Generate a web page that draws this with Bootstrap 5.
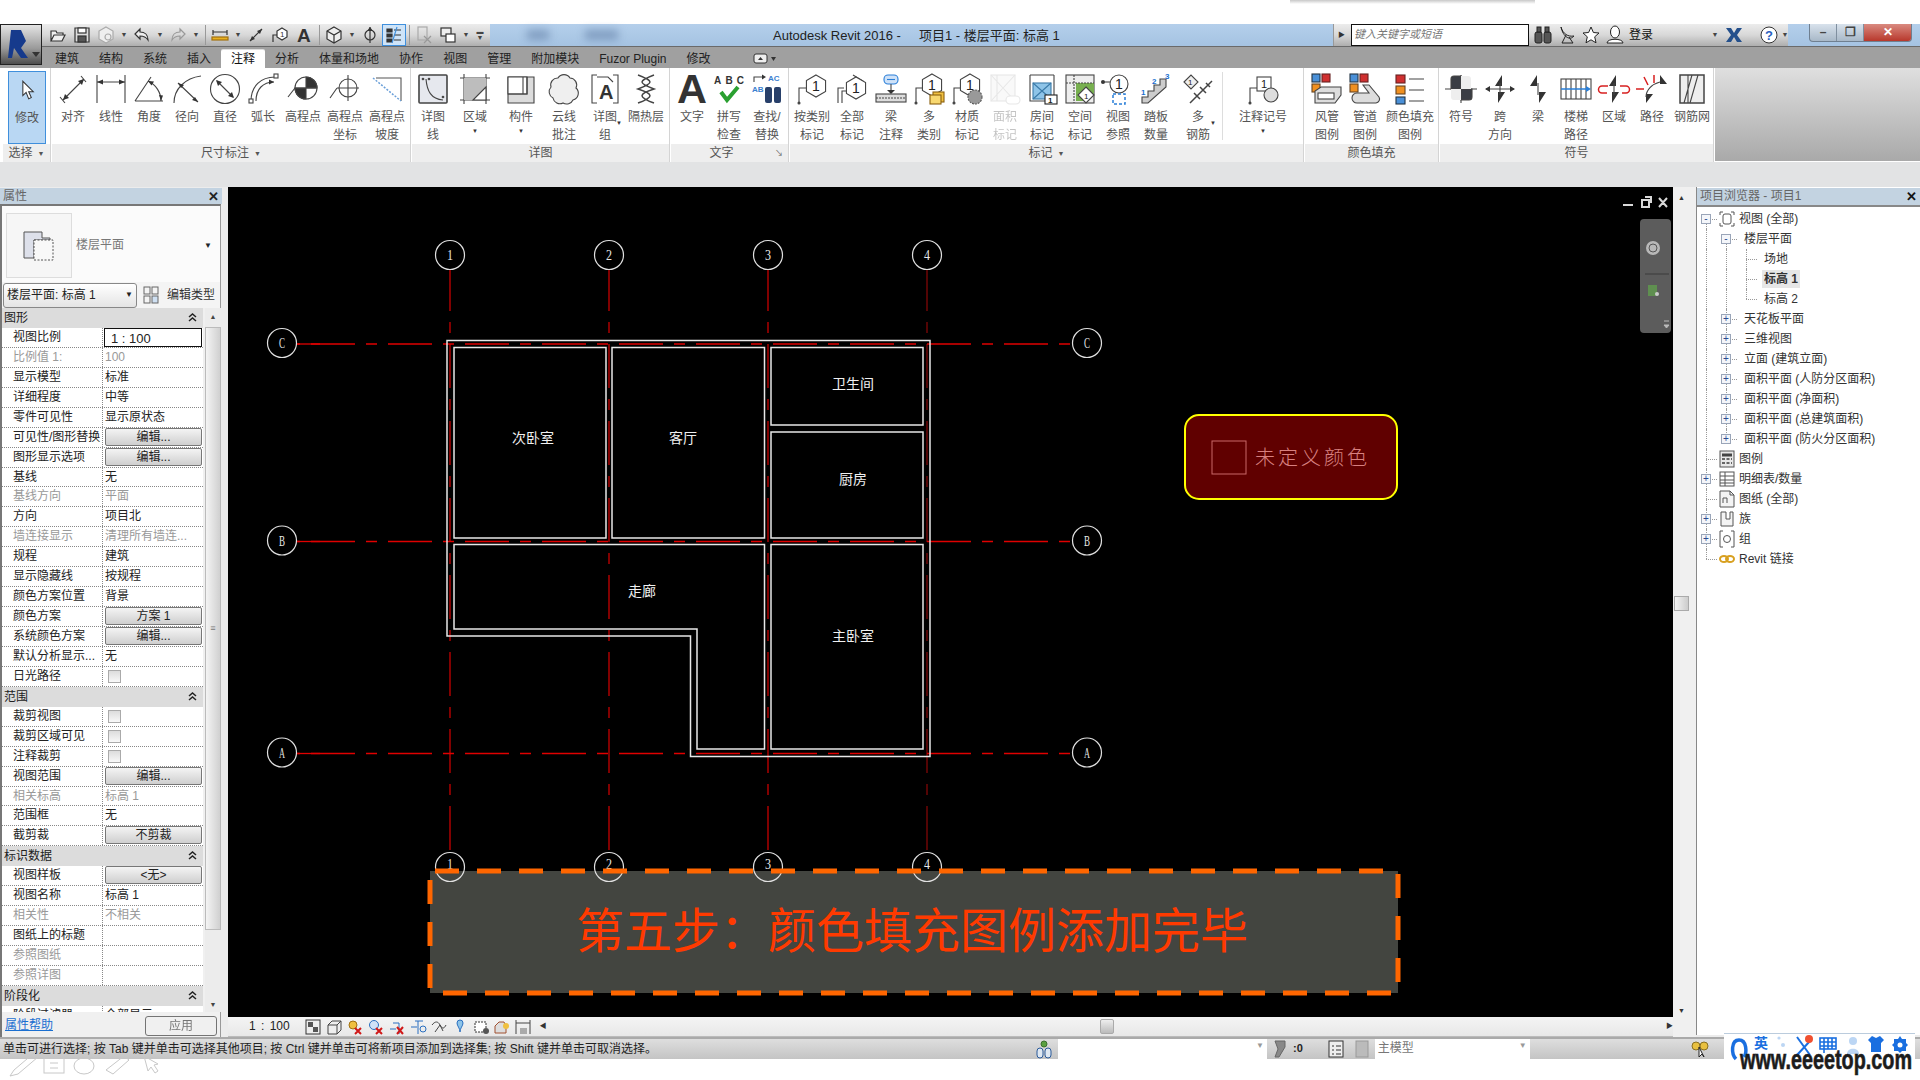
<!DOCTYPE html>
<html lang="zh-CN">
  <head>
    <meta charset="UTF-8" />
    <title>Autodesk Revit 2016 - 项目1 - 楼层平面: 标高 1</title>
    <link
      href="https://cdn.jsdelivr.net/npm/bootstrap@5.3.3/dist/css/bootstrap.min.css"
      rel="stylesheet"
    />
    <style>
      body {
        width: 1920px;
        height: 1080px;
        overflow: hidden;
        background: #fff;
        font-family: "Liberation Sans", "Noto Sans CJK SC", sans-serif;
        font-size: 12px;
        color: #333;
        line-height: 1.2;
        position: relative;
      }
      svg { overflow: visible; }
      .top-gap { height: 24px; }
      .top-shadow {
        margin-left: 1290px;
        width: 245px;
        height: 4px;
        background: linear-gradient(#c8c8c8, #fff);
      }
      .head-row { background: #a0a0a0; height: 44px; }
      .app-btn {
        width: 42px;
        height: 41px;
        flex: none;
        border: 1px solid #222;
        background: linear-gradient(#e4e4e4, #9a9a9a 60%, #4c4c4c);
        position: relative;
        z-index: 2;
      }
      .title-bar {
        height: 23px;
        background: linear-gradient(#b4cfeb, #a5c3e2);
        border-bottom: 1px solid #6a6a6a;
      }
      .qat {
        width: 448px;
        padding-left: 4px;
        height: 22px;
        flex: none;
        background: linear-gradient(#ececec, #d8d8d8 50%, #aeaeae);
      }
      .qi { width: 24px; flex: none; display: flex; justify-content: center; }
      .qi-on { background: #cfe4f8; outline: 1px solid #3f8fdc; outline-offset: -1px; height: 22px; align-items: center; }
      .qd { width: 12px; flex: none; text-align: center; font-size: 7px; color: #444; }
      .qs { width: 1px; height: 20px; background: #999; margin: 0 2px 0 3px; flex: none; }
      .blur-a { width: 22px; height: 10px; background: #7f9cc0; filter: blur(4px); margin-left: 37px; }
      .blur-b { width: 33px; height: 10px; background: #7f9cc0; filter: blur(4px); margin-left: 36px; }
      .win-title { margin-left: 155px; font-size: 13px; color: #222; white-space: nowrap; width: 560px; flex: none; padding-top: 1px; }
      .win-title span { margin-left: 18px; }
      .search-bar {
        width: 455px;
        height: 22px;
        flex: none;
        background: linear-gradient(#ececec, #d8d8d8 50%, #aeaeae);
        border-left: 1px solid #999;
        font-size: 11px;
      }
      .search-input {
        width: 178px;
        height: 22px;
        margin-left: 13px;
        background: #fff;
        border: 1px solid #111;
        color: #777;
        font-style: italic;
        padding: 3px 2px;
        flex: none;
      }
      .search-icons { width: 210px; flex: none; }
      .win-ctl {
        margin-left: 21px;
        width: 103px;
        height: 18px;
        flex: none;
        align-self: flex-start;
        border: 1px solid #6f7f90;
        border-top: 0;
        border-radius: 0 0 4px 4px;
        overflow: hidden;
        background: linear-gradient(#d8e2ec, #a8b8c8);
      }
      .win-ctl div { width: 27px; text-align: center; border-right: 1px solid #7f8f9f; color: #444; font-weight: bold; line-height: 17px; }
      .win-ctl .win-x { flex: 1; border: 0; color: #fff; background: linear-gradient(#d98a80, #b8382c); }
      .tabs-row { height: 18px; margin: 3px 0 0 3px; flex-wrap: nowrap; }
      .tabs-row .nav-link {
        padding: 2px 10px 0;
        color: #222;
        height: 18px;
        white-space: nowrap;
        font-size: 12px;
      }
      .tabs-row .nav-link.active { background: #fff; border-radius: 2px 2px 0 0; box-shadow: 0 -1px 0 #ddd; color: #111; }
      .ribbon-wrap { height: 94px; background: #fff; }
      .rb-panel { flex: none; border-right: 1px solid #d4d4d4; height: 94px; display: flex; flex-direction: column; margin-right: 1px; }
      .rb-tools { height: 76px; display: flex; }
      .rb-name { height: 18px; background: #eeeeee; text-align: center; color: #555; line-height: 19px; font-size: 12px; white-space: nowrap; position: relative; }
      .rb-name i { font-style: normal; font-size: 7px; margin-left: 5px; vertical-align: 1px; }
      .rb-name em { position: absolute; right: 5px; top: 0; font-style: normal; font-size: 8px; }
      .rb-tool { flex: none; display: flex; flex-direction: column; align-items: center; padding-top: 5px; white-space: nowrap; color: #555; position: relative; }
      .rb-tool svg { display: block; height: 32px; width: 32px; }
      .rb-tool .lb { margin-top: 3px; line-height: 18px; text-align: center; }
      .rb-tool .mini { font-size: 6px; line-height: 8px; color: #333; margin-top: 1px; }
      .rb-tool .side-caret { position: absolute; right: 6px; top: 52px; font-size: 6px; color: #333; }
      .rb-on { background: #b9d7f3; border: 1px solid #3f8fdc; margin: 3px 0 0 5px; height: 73px; padding-top: 2px; }
      .rb-off { opacity: 0.35; }
      .rb-sep { width: 1px; background: #ddd; margin: 4px 0; flex: none; }
      .rb-rest { flex: 1; height: 93px; background: linear-gradient(#dfdfdf, #a9a9a9); }
      .gap-band { height: 25px; background: #e2e3e4; }
      .main-row { height: 850px; background: #ececec; }
      .left-pane { width: 228px; flex: none; height: 850px; padding-top: 1px; }
      .pane-head { height: 16px; width: 222px; background: #c3d3e1; color: #666; padding: 0 3px; line-height: 17px; }
      .pane-head b { color: #222; font-size: 13px; }
      .left-body { width: 221px; border: 2px solid #777; border-right: 1px solid #999; height: 833px; background: #f0f0f0; border-bottom: 0; }
      .type-tile-row { height: 76px; background: #fbfbfb; padding: 3px 0 0 4px; color: #777; }
      .type-tile { width: 66px; height: 65px; border: 1px solid #ddd; background: #f6f6f6; }
      .type-drop-row { height: 26px; background: #f4f4f4; }
      .type-drop { width: 134px; height: 25px; border: 1px solid #888; border-radius: 3px; margin-left: 1px; padding: 0 3px; background: linear-gradient(#fff, #e4e4e4); color: #222; font-size: 12px; }
      .caret-dn { margin-left: auto; font-size: 8px; color: #222; }
      .prop-col { width: 201px; flex: none; background: #fff; height: 704px; overflow: hidden; }
      .prop-head { height: 19.950px; background: #dcdcdc; padding-left: 2px; color: #222; line-height: 20px; font-size: 12px; }
      .prop-head svg { margin: 5px 6px 0 auto; }
      .prop-row { height: 19.950px; border-bottom: 1px dotted #888; line-height: 19px; color: #222; }
      .prop-row.dim { color: #999; }
      .prop-k { width: 101px; flex: none; padding-left: 11px; border-right: 1px dotted #888; white-space: nowrap; overflow: hidden; height: 19px; font-size: 12px; }
      .prop-v { flex: 1; padding-left: 2px; white-space: nowrap; overflow: hidden; height: 19px; font-size: 12px; }
      .prop-btn {
        width: 97px;
        height: 18px;
        padding: 0;
        display: block;
        font-size: 12px;
        line-height: 16px;
        color: #222;
        border: 1px solid #777;
        border-radius: 2px;
        background: linear-gradient(#f4f4f4, #cfcfcf);
      }
      .prop-in { width: 98px; height: 19px; border: 1px solid #111; padding-left: 6px; font-size: 13px; background: #fff; margin-left: -1px; }
      .prop-chk { width: 13px; height: 13px; border: 1px solid #aaa; background: linear-gradient(#ddd, #f8f8f8); margin: 3px 0 0 3px; }
      .side-scroll { width: 16px; flex: none; margin-left: 2px; height: 704px; background: #ececec; }
      .side-thumb { height: 603px; background: linear-gradient(90deg, #f4f4f4, #d0d0d0); border: 1px solid #bbb; margin-top: 2px; }
      .side-arrow { height: 17px; text-align: center; font-size: 7px; line-height: 17px; color: #444; }
      .left-foot { height: 25px; padding: 2px 3px 0 3px; background: #f0f0f0; }
      .left-foot a { color: #1a6fd0; }
      .apply-btn { width: 72px; height: 20px; margin-left: auto; padding: 0; font-size: 12px; color: #bbb; border: 1px solid #ccc; border-radius: 3px; background: #f2f2f2; }
      .canvas-col { width: 1445px; flex: none; }
      .canvas-svg { display: block; width: 1445px; height: 830px; background: #000; }
      .view-strip { height: 20px; background: linear-gradient(#f4f4f4, #e8e8e8); border-bottom: 1px solid #bbb; padding-left: 21px; }
      .view-strip svg { flex: none; margin-right: 5px; }
      .view-scale { width: 58px; font-size: 12px; color: #222; word-spacing: 2px; }
      .hbar-thumb { width: 15px; height: 15px; margin-left: 553px; background: linear-gradient(#eee, #bbb); border: 1px solid #aaa; border-radius: 2px; }
      .v-scroll { width: 23px; flex: none; background: #f0f0f0; padding-left: 1px; }
      .v-arrow { font-size: 7px; width: 15px; text-align: center; }
      .v-thumb { width: 15px; height: 15px; margin-top: 392px; background: linear-gradient(90deg, #f4f4f4, #ccc); border: 1px solid #aaa; }
      .right-pane { width: 224px; flex: none; border-left: 1px solid #888; height: 848px; background: #fff; }
      .tree-head { background: #c3d3e1; color: #666; padding: 1px 0 0 3px; border-bottom: 2px solid #888; height: 19px; margin-top: 1px; line-height: 15px; }
      .tree-head b { margin-left: auto; color: #111; margin-right: 3px; font-size: 13px; }
      .tree-row { height: 20px; color: #333; white-space: nowrap; }
      .tree-body { padding-top: 2px; }
      .tc { width: 20px; height: 20px; flex: none; position: relative; }
      .tc.v::before, .tc.top::before, .tc.bot::before { content: ""; position: absolute; left: 9px; top: 0; bottom: 0; border-left: 1px dotted #999; }
      .tc.top::before { bottom: 10px; }
      .tc.bot::before { top: 10px; }
      .tc.h::after { content: ""; position: absolute; left: 9px; right: 0; top: 10px; border-top: 1px dotted #999; }
      .tc u { position: absolute; left: 4px; top: 5px; width: 10px; height: 10px; background: #f4f6fa; border: 1px solid #9aa5b8; z-index: 1; text-decoration: none; font-size: 10px; line-height: 8px; text-align: center; color: #2a4a90; }
      .tree-sel { background: #e6e6e6; font-weight: bold; padding: 2px 2px; }
      .status-bar { height: 22px; background: linear-gradient(#dedede, #c4c4c4); border-top: 2px solid #aaa; color: #222; white-space: nowrap; }
      .status-text { width: 1034px; flex: none; padding: 1px 0 0 3px; overflow: hidden; font-size: 12px; }
      .status-box { height: 20px; background: #fff; flex: none; color: #777; padding: 2px 3px; display: flex; font-size: 12px; }
      .ime-bar { position: absolute; left: 1724px; top: 1033px; width: 191px; height: 27px; background: #fff; border-top: 1px solid #bcd; padding-top: 1px; }
      .ime-bar span { color: #1a6fe0; font-weight: bold; font-size: 14px; line-height: 17px; }
      .mark-svg { position: absolute; left: 1738px; top: 1044px; }
      .sketch-svg { position: absolute; left: 8px; top: 1050px; }
    </style>
  </head>

  <body>
    <div class="top-gap"><div class="top-shadow"></div></div>

    <div class="head-row d-flex">
      <div class="app-btn d-flex align-items-center">
        <svg width="40" height="39" viewBox="0 0 40 39">
          <path fill="#163a8c" d="M7 33L10 5h10l5 11-5 7 7 10h-7l-7-10-2 10z" />
          <path fill="#333" d="M31 27h8l-4 5z" />
        </svg>
      </div>
      <div class="flex-grow-1" style="min-width:0">
        <div class="title-bar d-flex">
          <div class="qat d-flex align-items-center" id="qat"></div>
          <div class="blur-a align-self-center"></div>
          <div class="blur-b align-self-center"></div>
          <div class="win-title d-flex align-items-center">Autodesk Revit 2016 -<span>项目1 - 楼层平面: 标高 1</span></div>
          <div class="search-bar d-flex align-items-center">
            <span style="font-size:7px;margin-left:4px;width:0">▶</span>
            <div class="search-input">键入关键字或短语</div>
            <div class="search-icons d-flex align-items-center gap-1 ms-1">
              <svg width="20" height="18" viewBox="0 0 20 18" fill="#555" stroke="#222"><rect x="2" y="6" width="7" height="11" rx="2"/><rect x="11" y="6" width="7" height="11" rx="2"/><rect x="4" y="1" width="4" height="5"/><rect x="12" y="1" width="4" height="5"/></svg>
              <svg width="20" height="20" viewBox="0 0 20 20" fill="none" stroke="#222"><path d="M4 2c2 7 7 10 13 9-4 5-11 1-13-9zM9 10l-4 8h11l-4-6"/></svg>
              <svg width="20" height="20" viewBox="0 0 20 20" fill="#fff" stroke="#222"><path d="M10 2l2.400 5.500 5.600.5-4.300 3.800 1.300 6L10 14.800 5 17.800l1.300-6L2 8l5.600-.5z"/></svg>
              <svg width="20" height="20" viewBox="0 0 20 20" fill="#fff" stroke="#222"><ellipse cx="10" cy="7" rx="4.500" ry="6"/><path d="M2 18c0-5 16-5 16 0z"/></svg>
              <span style="font-size:12px;color:#111">登录</span>
              <span class="qd" style="margin-left:auto">▼</span>
              <svg width="18" height="18" viewBox="0 0 18 18"><path fill="#24508c" d="M1 2h5l3 5 3-5h5l-5 7 5 7h-5l-3-5-3 5H1l5-7z"/></svg>
            </div>
            <div style="width:1px;height:20px;background:#aaa;margin:0 8px"></div>
            <svg width="20" height="20" viewBox="0 0 20 20"><circle cx="10" cy="10" r="8" fill="#fff" stroke="#333"/><text x="6" y="15" font-size="13" font-weight="bold" fill="#2a60c0" font-family="Liberation Sans">?</text></svg>
            <span class="qd">▼</span>
          </div>
          <div class="win-ctl d-flex"><div>–</div><div>❐</div><div class="win-x">✕</div></div>
        </div>
        <ul class="nav tabs-row" id="tabs"></ul>
      </div>
    </div>

    <div class="ribbon-wrap d-flex" id="ribbon"></div>
    <div class="gap-band"></div>

    <div class="main-row d-flex">
      <div class="left-pane">
        <div class="pane-head d-flex justify-content-between"><span>属性</span><b>✕</b></div>
        <div class="left-body">
          <div class="type-tile-row d-flex align-items-center">
            <div class="type-tile d-flex align-items-center justify-content-center">
              <svg width="32" height="32" viewBox="0 0 32 32" fill="none" stroke="#555">
                <path fill="#dde0ea" d="M1 2h18v6h8v2H11v18H1z" />
                <rect x="11" y="10" width="19" height="20" fill="#f8f8f8" stroke-dasharray="2 1.500" />
              </svg>
            </div>
            <span class="ms-1">楼层平面</span>
            <span class="caret-dn me-2 text-dark">▼</span>
          </div>
          <div class="type-drop-row d-flex align-items-center">
            <div class="type-drop d-flex align-items-center">楼层平面: 标高 1<span class="caret-dn">▼</span></div>
            <svg class="ms-1" width="22" height="18" viewBox="0 0 22 18" fill="none" stroke="#666">
              <rect x="3" y="1" width="6" height="7" /><rect x="11" y="1" width="6" height="7" /><rect x="3" y="10" width="6" height="7" /><rect x="11" y="10" width="6" height="7" fill="#cfe0f2" />
            </svg>
            <span class="ms-1" style="color:#333">编辑类型</span>
          </div>
          <div class="d-flex">
            <div class="prop-col" id="props"></div>
            <div class="side-scroll">
              <div class="side-arrow">▲</div>
              <div class="side-thumb d-flex align-items-center justify-content-center"><span style="color:#777;font-size:9px">≡</span></div>
              <div class="side-arrow" style="margin-top:66px">▼</div>
            </div>
          </div>
          <div class="left-foot d-flex align-items-center">
            <a href="#">属性帮助</a>
            <button type="button" class="btn apply-btn" disabled>应用</button>
          </div>
        </div>
      </div>

      <div class="canvas-col">
        <svg class="canvas-svg" id="plan" viewBox="228 187 1445 830"></svg>
        <div class="view-strip d-flex align-items-center" id="strip"></div>
      </div>

      <div class="v-scroll d-flex flex-column">
        <div class="v-arrow" style="margin-top:7px;height:10px">▲</div>
        <div class="v-thumb"></div>
        <div class="v-arrow" style="margin-top:396px">▼</div>
      </div>

      <div class="right-pane">
        <div class="tree-head d-flex"><span>项目浏览器 - 项目1</span><b>✕</b></div>
        <div class="tree-body" id="tree"></div>
      </div>
    </div>

    <div class="status-bar d-flex align-items-center" id="status">
      <div class="status-text">单击可进行选择; 按 Tab 键并单击可选择其他项目; 按 Ctrl 键并单击可将新项目添加到选择集; 按 Shift 键并单击可取消选择。</div>
      <svg width="20" height="20" viewBox="0 0 20 20" fill="#dfe8f2" stroke="#2a5a9a"><rect x="3" y="9" width="6" height="10" rx="3" /><rect x="11" y="9" width="6" height="10" rx="3" /><circle cx="10" cy="5" r="3" fill="#5aa040" stroke="#3a7030" /></svg>
      <div class="status-box ms-1" style="width:209px"><span class="ms-auto" style="font-size:8px;color:#999">▼</span></div>
      <svg class="ms-1" width="18" height="20" viewBox="0 0 18 20" fill="#888" stroke="#666"><path d="M4 2h10v6l-6 10H4l3-8z" /></svg>
      <span class="ms-1 me-4 fw-bold" style="font-size:11px">:0</span>
      <svg width="18" height="20" viewBox="0 0 18 20" fill="#eee" stroke="#333"><rect x="2" y="2" width="14" height="16" /><path d="M5 7h2M9 7h5M5 11h2M9 11h5M5 15h2M9 15h5" /></svg>
      <svg class="ms-2" width="18" height="20" viewBox="0 0 18 20" fill="#bbb" stroke="#999"><rect x="3" y="2" width="12" height="16" /></svg>
      <div class="status-box ms-1" style="width:155px">主模型<span class="ms-auto" style="font-size:8px;color:#999">▼</span></div>
      <svg style="margin-left:160px" width="20" height="20" viewBox="0 0 20 20" fill="#e8c040" stroke="#8a7020"><circle cx="6" cy="7" r="4" /><circle cx="14" cy="7" r="4" /><path fill="#fff" stroke="#222" d="M9 8v10l3-3 2 3z" /></svg>
    </div>

    <div class="ime-bar d-flex align-items-start">
      <svg class="ms-1" width="22" height="26" viewBox="0 0 22 26" fill="none" stroke="#1a6fe0" stroke-width="3.500"><path d="M8 24C3 19 3 5 11 5s8 13 5 17" /></svg>
      <span class="ms-1">英</span>
      <svg class="ms-2" width="10" height="14" viewBox="0 0 10 14" fill="#bcd6f4"><circle cx="3" cy="3" r="1.600" /><circle cx="7" cy="10" r="2" /></svg>
      <svg class="ms-2" width="20" height="24" viewBox="0 0 20 24" fill="none" stroke="#1a6fe0" stroke-width="2"><path d="M3 2l13 18M16 6L3 20" /><circle cx="15" cy="4" r="4" fill="#f05030" stroke="none" /></svg>
      <svg class="ms-1" width="20" height="20" viewBox="0 0 20 20" fill="none" stroke="#1a6fe0" stroke-width="1.600"><rect x="2" y="3" width="16" height="11" /><path d="M2 7h16M2 11h16M6 3v11M10 3v11M14 3v11M6 14v4" /></svg>
      <svg class="ms-2" width="14" height="20" viewBox="0 0 14 20" fill="#bcd6f4"><circle cx="7" cy="6" r="4" /><path d="M1 19c0-7 12-7 12 0z" /></svg>
      <svg class="ms-2" width="16" height="18" viewBox="0 0 16 18" fill="#1a6fe0"><path d="M4 1l4 2 4-2 4 4-3 3v9H3V8L0 5z" /></svg>
      <svg class="ms-2" width="16" height="18" viewBox="0 0 16 18" fill="#1a6fe0"><path d="M8 1l2 3h4v4l2 2-2 2v4h-4l-2 2-2-2H2v-4l-2-2 2-2V4h4z" /><circle cx="8" cy="10" r="2.500" fill="#fff" /></svg>
    </div>
    <svg class="mark-svg" width="178" height="34" viewBox="0 0 178 34">
      <text x="2" y="25" font-family="Liberation Sans" font-weight="bold" font-size="28" fill="#1c1c1c" stroke="#1c1c1c" stroke-width=".6" textLength="172" lengthAdjust="spacingAndGlyphs">www.eeeetop.com</text>
    </svg>
    <svg class="sketch-svg" width="160" height="28" viewBox="0 0 160 28" fill="none" stroke="#c8c8c8">
      <path d="M2 26l4-6L26 3l4 4L10 24z" />
      <rect x="36" y="8" width="20" height="15" />
      <path d="M42 13h8M42 18h8" />
      <ellipse cx="76" cy="16" rx="10" ry="8" />
      <path d="M98 20l18-14 5 4-16 14z" />
      <path d="M136 6l4 15 3-4 4 6 3-2-4-6 4-1z" />
    </svg>

    <script src="https://cdn.jsdelivr.net/npm/bootstrap@5.3.3/dist/js/bootstrap.bundle.min.js"></script>
    <script>
      const $ = (id) => document.getElementById(id);
      const FILL = 'fill="#333" stroke="none"';

      // quick access toolbar
      const q18 = (s) => `<svg width="18" height="18" viewBox="0 0 18 18" fill="none" stroke="#333" stroke-width="1.2">${s}</svg>`;
      const qat = [
        ["i", '<path d="M2 15V5h5l1 2h6v2M2 15l3-6h11l-3 6z" fill="#eee"/>'],
        ["i", '<path fill="#ddd" d="M2 2h14v14H2z"/><rect x="5" y="2" width="8" height="5" fill="#fff"/><rect x="5" y="10" width="8" height="6" fill="#555"/>'],
        ["i", '<path stroke="#aaa" fill="#eee" d="M9 1l7 4v8l-7 4-7-4V5z"/><circle cx="11" cy="11" r="3" stroke="#aaa"/>'],
        ["d"],
        ["i", '<path d="M7 3L2 8l5 5V10c4 0 6 1 8 4 0-5-3-8-8-8z" fill="#eee"/>'],
        ["d"],
        ["i", '<path stroke="#999" d="M11 3l5 5-5 5V10c-4 0-6 1-8 4 0-5 3-8 8-8z"/>'],
        ["d"],
        ["s"],
        ["i", '<path d="M2 4v5M16 4v5M2 6h14"/><rect x="1" y="11" width="16" height="3" fill="#e8b020" stroke="#a07010"/>'],
        ["d"],
        ["i", '<path d="M3 15L15 3"/><path ' + FILL + ' d="M3 15l2-5 3 3zM15 3l-5 2 3 3z"/>'],
        ["i", '<path d="M2 16v-7h4"/><path fill="#fff" d="M11 2l5 3v6l-5 3-5-3V5z"/><text x="9" y="11" font-size="8" fill="#333" stroke="none">1</text>'],
        ["i", '<text x="2" y="16" font-size="19" font-weight="bold" font-family="Liberation Sans" fill="#333" stroke="none">A</text>'],
        ["s"],
        ["i", '<path d="M9 1l7 4v8l-7 4-7-4V5z" fill="#eee"/><path d="M2 5l7 4 7-4M9 9v8"/>'],
        ["d"],
        ["i", '<circle cx="9" cy="9" r="5"/><path d="M9 1v16" /><path ' + FILL + ' d="M9 1l3 4H6z"/>'],
        ["on", '<path d="M2 3h5v3H2zM2 8h5v3H2zM2 13h5v3H2z" fill="#333"/><path d="M9 4h7M9 9h7M9 14h7"/><path stroke="#3f8fdc" d="M7 17L12 1"/>'],
        ["s"],
        ["i", '<rect x="3" y="1" width="9" height="13" stroke="#aaa"/><path stroke="#999" d="M9 10l7 7M16 10l-7 7"/>'],
        ["i", '<rect x="2" y="2" width="10" height="8" fill="#eee"/><rect x="7" y="8" width="9" height="8" fill="#fff"/>'],
        ["d"],
        ["c"],
      ];
      $("qat").innerHTML = qat
        .map(([t, s]) => {
          if (t === "i") return `<div class="qi">${q18(s)}</div>`;
          if (t === "on") return `<div class="qi qi-on">${q18(s)}</div>`;
          if (t === "d") return '<div class="qd">▼</div>';
          if (t === "c") return '<div class="qd" style="width:16px;line-height:6px">▬<br>▼</div>';
          return '<div class="qs"></div>';
        })
        .join("");

      $("tabs").innerHTML = ["建筑", "结构", "系统", "插入", "注释", "分析", "体量和场地", "协作", "视图", "管理", "附加模块", "Fuzor Plugin", "修改"]
        .map((t) => `<li class="nav-item"><a class="nav-link${t === "注释" ? " active" : ""}" href="#">${t}</a></li>`)
        .join("") +
        '<li class="nav-item ms-4 ps-2 d-flex align-items-center"><svg width="24" height="12" viewBox="0 0 24 12"><rect x="1" y="1" width="13" height="9" rx="2" fill="#eee" stroke="#333"/><path fill="#333" d="M5 7l2.500-3L10 7zM18 4h5l-2.500 4z"/></svg></li>';

      // ribbon icons, all in a 32x32 box
      const hex = (x, y, r) => {
        const a = r * 0.87, b = r * 0.5;
        return `<path fill="#fff" d="M${x} ${y - r}l${a} ${b}v${r}l${-a} ${b}l${-a} ${-b}v${-r}z"/><text x="${x - 4}" y="${y + 5}" font-size="14" font-family="Liberation Sans" fill="#222" stroke="none">1</text>`;
      };
      const lead = '<path d="M3 30V15h7"/><circle cx="3" cy="30" r="1" fill="#333"/>';
      const ic = {
        cursor: '<path transform="translate(6 6) scale(.65)" fill="#fff" stroke="#333" stroke-width="1.600" d="M9 2v22l5-5 4 10 4-2-4-9h7z"/>',
        align: '<path d="M3 24l5 6M24 3l5 6M6 27L27 6"/><path ' + FILL + ' d="M6 27l2-6 4 4zM27 6l-6 2 4 4z"/>',
        linear: '<path d="M2 2v28M30 2v28M2 9h28"/><path ' + FILL + ' d="M2 9l6-2.500v5zM30 9l-6-2.500v5z"/>',
        angle: '<path d="M2 28h28M2 28L18 4M15 8a22 22 0 0 1 13 20"/><path ' + FILL + ' d="M15 8l6 .5-2.500 4zM28 28l-2-6 4 .5z"/>',
        radial: '<path d="M3 30C3 16 14 5 30 3M7 10L27 29"/><path ' + FILL + ' d="M27 29l-6-2 3-3zM7 10l6 2-3 3z"/>',
        diameter: '<circle cx="16" cy="16" r="14.500" fill="#fff"/><path d="M8 8L24 24"/><path ' + FILL + ' d="M7 7l6 2-4 4zM25 25l-6-2 4-4z"/>',
        arc: '<path d="M4 28C4 13 14 4 28 4M9 28C9 16 16 9 27 9"/><rect x="2" y="26" width="4" height="4" fill="#fff"/><rect x="27" y="1" width="4" height="4" fill="#fff"/><path ' + FILL + ' d="M27 9l-5-2.500v5z"/>',
        spot: '<circle cx="19" cy="15" r="11"/><path fill="#333" d="M19 15V4a11 11 0 0 1 11 11zM19 15v11A11 11 0 0 1 8 15z"/><path d="M1 24l7-9h22"/>',
        coord: '<circle cx="19" cy="15" r="9"/><path d="M19 2v26M8 15h22M1 25l7-10"/>',
        slope: '<path stroke="#555" d="M5 5h25v23"/><path stroke="#6a9fd8" stroke-width="1.500" stroke-dasharray="2 1.500" d="M2 5L30 28"/>',
        dline: '<rect x="2" y="2" width="28" height="28" rx="1" fill="#e6e8ee" stroke="#444" stroke-width="1.600"/><path d="M9 6c1 12 5 20 17 21"/><circle cx="6" cy="6" r=".8"/><circle cx="12" cy="6" r=".8"/><circle cx="26" cy="24" r=".8"/>',
        region: '<path d="M1 5h30M1 27h30M5 1v30M27 1v30"/><rect x="5" y="5" width="22" height="22" fill="#bdbdbd" stroke="none"/><path fill="#fff" d="M27 14L14 27h13z" stroke="#444"/>',
        comp: '<path fill="#dcdcdc" d="M3 4h26v26H3z"/><path fill="#fff" d="M8 4h10v17H3V4zM18 4h4v17h-4z"/><path d="M22 4v17H3"/>',
        cloud: '<path fill="#efefef" d="M10 5a7 7 0 0 1 12 0 7 7 0 0 1 6 10 7 7 0 0 1-3 12 7 7 0 0 1-10 3 7 7 0 0 1-10-5 7 7 0 0 1-2-11 7 7 0 0 1 7-9z"/>',
        group: '<path d="M8 2H3v28h5M24 2h5v28h-5"/><path d="M8 4h11l5 5"/><text x="10" y="26" font-size="20" font-weight="bold" font-family="Liberation Sans" fill="#333" stroke="none">A</text>',
        insul: '<path stroke-width="1.500" d="M8 2c16 6 16 8 0 14 16 5 16 8 0 14M24 2C8 8 8 10 24 16 8 21 8 24 24 30"/>',
        bigA: '<text x="1" y="30" font-size="40" font-weight="bold" font-family="Liberation Sans" fill="#333" stroke="none" textLength="30" lengthAdjust="spacingAndGlyphs">A</text>',
        spell: '<text x="1" y="11" font-size="10" font-weight="bold" font-family="Liberation Sans" fill="#333" stroke="none" textLength="30">ABC</text><path stroke="#2aa030" fill="none" stroke-width="4" d="M8 19l6 8L25 14"/>',
        find: '<path d="M3 9V4h9"/><path ' + FILL + ' d="M15 4l-4-2.500v5z"/><text x="17" y="8" font-size="8" font-weight="bold" fill="#3a80d0" stroke="none">AC</text><text x="1" y="19" font-size="8" font-weight="bold" fill="#3a80d0" stroke="none">AB</text><rect x="14" y="14" width="7" height="16" rx="2" fill="#28406a" stroke="none"/><rect x="23" y="14" width="7" height="16" rx="2" fill="#28406a" stroke="none"/>',
        tagcat: lead + hex(20, 13, 11),
        tagall: '<path d="M2 30V15h6M6 30V18h4"/>' + '<path fill="#fff" d="M17 2l10 6v12"/>' + hex(20, 15, 11),
        beam: '<rect x="9" y="2" width="14" height="9" rx="4" fill="#cfe2f8" stroke="#2a7fd8"/><path stroke="#2a7fd8" d="M12 6.500h8"/><path d="M16 11v8"/><path ' + FILL + ' d="M16 21l-4-4h8z"/><rect x="1" y="21" width="30" height="8" fill="#ddd"/><path stroke-dasharray="2 1" d="M1 25h30"/>',
        multi: lead + hex(19, 12, 11) + '<rect x="20" y="19" width="11" height="10" fill="#f0c040" stroke="#8a6010"/><rect x="17" y="22" width="11" height="9" fill="#f8d870" stroke="#8a6010"/>',
        mat: lead + hex(19, 12, 11) + '<circle cx="24" cy="24" r="7" fill="#999" stroke="#555" stroke-dasharray="2 1"/>',
        area: '<g stroke="#bbb"><rect x="2" y="2" width="24" height="26" fill="#f0f0f0"/><path d="M2 2l24 26M26 2L2 28M8 2v26"/><rect x="17" y="23" width="14" height="8" rx="4" fill="#fff"/></g>',
        room: '<path d="M4 2h24M4 2v26h24V2" /><rect x="7" y="10" width="18" height="16" fill="#8ec4e8" stroke="#3a7aa8"/><path stroke="#3a7aa8" d="M7 10l18 16M25 10L7 26"/><rect x="19" y="22" width="12" height="9" fill="#fff" stroke="#222"/><text x="22" y="30" font-size="8" font-weight="bold" fill="#222" stroke="none">1</text>',
        space: '<rect x="2" y="2" width="28" height="28" fill="#eee"/><path fill="#78b050" stroke="none" d="M12 10h18v10l-7 8H12z"/><path stroke-dasharray="2 1" d="M2 10h28M10 2v28"/><path fill="#fff" d="M22 14l8 8-8 8-8-8z"/><text x="20" y="26" font-size="8" fill="#222" stroke="none">1</text>',
        vref: '<path d="M1 9h8"/><circle cx="1" cy="9" r="1.500" fill="#333"/><circle cx="17" cy="11" r="9" fill="#fff"/><text x="13" y="16" font-size="14" font-family="Liberation Sans" fill="#222" stroke="none">1</text><rect x="11" y="21" width="12" height="10" stroke="#2a7fd8" stroke-width="1.500" stroke-dasharray="3 2"/>',
        tread: '<path fill="#ccc" d="M2 30V24h6v-6h6v-6h6V6h6v8L8 30z"/><text x="1" y="22" font-size="8" font-weight="bold" fill="#1a6fd0" stroke="none">1</text><text x="12" y="11" font-size="8" font-weight="bold" fill="#1a6fd0" stroke="none">2</text><text x="25" y="6" font-size="8" font-weight="bold" fill="#1a6fd0" stroke="none">3</text>',
        rebar: '<path fill="#eee" d="M2 9l7-7 7 7-7 7z"/><text x="6" y="12" font-size="8" fill="#222" stroke="none">1</text><path stroke-width="1.500" d="M8 30L30 8M12 20l6 6M18 14l6 6M24 10l4 4"/>',
        keynote: lead + '<rect x="10" y="4" width="14" height="14" fill="#fff"/><text x="14" y="15" font-size="11" fill="#222" stroke="none">1</text><circle cx="24" cy="22" r="7" fill="#ddd"/>',
        duct: '<rect x="1" y="1" width="8" height="8" fill="#4a90d8" stroke="#234"/><rect x="11" y="1" width="8" height="8" fill="#d03030" stroke="#622"/><rect x="1" y="11" width="8" height="8" fill="#f09020" stroke="#642"/><path fill="#ddd" d="M4 30V18l6-4h20v8l-6 8z"/><rect x="7" y="20" width="16" height="6" fill="#fff"/>',
        pipe: '<rect x="1" y="1" width="8" height="8" fill="#4a90d8" stroke="#234"/><rect x="11" y="1" width="8" height="8" fill="#d03030" stroke="#622"/><rect x="1" y="11" width="8" height="8" fill="#f09020" stroke="#642"/><path fill="#ddd" d="M14 12h6l10 12a4 4 0 0 1-3 6H8a4 4 0 0 1 0-10h12z"/>',
        fill: '<rect x="2" y="2" width="9" height="8" fill="#d03030" stroke="#622"/><rect x="2" y="13" width="9" height="8" fill="#f09020" stroke="#642"/><rect x="2" y="24" width="9" height="7" fill="#4a90d8" stroke="#234"/><path d="M15 6h15M15 17h15M15 28h15"/>',
        sym: '<path d="M0 16h32M16 2v28"/><path fill="#3a3d44" d="M6 6a3 3 0 0 1 3-3h7v13H6zM16 16h11v8a3 3 0 0 1-3 3h-8z"/><path fill="#eee" stroke="none" d="M16 3h7a3 3 0 0 1 3 3v10H16zM6 16h10v11H9a3 3 0 0 1-3-3z"/>',
        span: '<path ' + FILL + ' d="M18 2v11l-7 0zM14 30V19l7 0z"/><path d="M16 10v12M2 16h28"/><path ' + FILL + ' d="M1 16l5-3v6zM31 16l-5-3v6z"/>',
        beamsym: '<path ' + FILL + ' d="M15 2v11l-7 0zM17 30V19l7 0z"/><path d="M16 10v12"/>',
        stair: '<rect x="1" y="6" width="30" height="20" fill="#fff"/><path d="M6 6v20M11 6v20M16 6v20M21 6v20M26 6v20"/><path stroke="#2a7fd8" stroke-width="1.500" d="M1 16h26"/><path fill="#2a7fd8" stroke="none" d="M31 16l-5-3v6z"/>',
        area2: '<path ' + FILL + ' d="M18 2v11l-7 0zM14 30V19l7 0z"/><path d="M16 10v12"/><path stroke="#d82020" stroke-width="1.500" d="M9 20H4a3 3 0 0 1 0-7h6M22 13h6a3 3 0 0 1 0 7h-4"/>',
        path: '<path ' + FILL + ' d="M24 2v9l7 0zM10 30V21l7 0z"/><path d="M10 24c0-7 6-13 14-15"/><path stroke="#d82020" stroke-width="1.500" d="M0 16h8M8 4l4 8M18 2v8"/>',
        mesh: '<rect x="4" y="2" width="24" height="28" fill="#eee" stroke-width="1.500"/><path d="M8 30L16 2M14 30L22 2M12 2v28"/>',
      };
      const panels = [
        { w: 48, name: "选择", arrow: 1, tools: [{ i: "cursor", w: 38, lb: "修改" }] },
        { w: 359, name: "尺寸标注", arrow: 1, pad: 2, tools: [["align", 38, "对齐"], ["linear", 38, "线性"], ["angle", 38, "角度"], ["radial", 38, "径向"], ["diameter", 38, "直径"], ["arc", 38, "弧长"], ["spot", 42, "高程点"], ["coord", 42, "高程点|坐标"], ["slope", 42, "高程点|坡度"]] },
        { w: 258, name: "详图", tools: [["dline", 42, "详图|线"], ["region", 42, "区域|▾"], ["comp", 50, "构件|▾"], ["cloud", 36, "云线|批注"], ["group", 46, "详图|组", "c"], ["insul", 36, "隔热层"]] },
        { w: 118, name: "文字", launcher: 1, tools: [["bigA", 42, "文字"], ["spell", 32, "拼写|检查"], ["find", 44, "查找/|替换"]] },
        { w: 514, name: "标记", arrow: 1, tools: [["tagcat", 44, "按类别|标记"], ["tagall", 36, "全部|标记"], ["beam", 42, "梁|注释"], ["multi", 34, "多|类别"], ["mat", 42, "材质|标记"], ["area", 34, "面积|标记", "off"], ["room", 40, "房间|标记"], ["space", 36, "空间|标记"], ["vref", 40, "视图|参照"], ["tread", 36, "踏板|数量"], ["rebar", 48, "多|钢筋", "c"], "sep", ["keynote", 80, "注释记号|▾"]] },
        { w: 134, name: "颜色填充", tools: [["duct", 44, "风管|图例"], ["pipe", 32, "管道|图例"], ["fill", 58, "颜色填充|图例"]] },
        { w: 274, name: "符号", tools: [["sym", 42, "符号"], ["span", 36, "跨|方向"], ["beamsym", 40, "梁"], ["stair", 36, "楼梯|路径"], ["area2", 40, "区域"], ["path", 36, "路径"], ["mesh", 44, "钢筋网"]] },
      ];
      const icon = (k) => `<svg viewBox="0 0 32 32" fill="none" stroke="#444" stroke-width="1.100">${ic[k]}</svg>`;
      const label = (lb) => lb.split("|").map((l) => (l === "▾" ? '<div class="mini">▼</div>' : `<div>${l}</div>`)).join("");
      let rib = '<div style="width:3px;flex:none"></div>';
      panels.forEach((p) => {
        const tools = p.tools
          .map((t) => {
            if (t === "sep") return '<div class="rb-sep"></div>';
            if (!Array.isArray(t)) return `<div class="rb-tool rb-on" style="width:${t.w}px">${icon(t.i)}<div class="lb">${t.lb}</div></div>`;
            const caret = t[3] === "c" ? '<span class="side-caret">▼</span>' : "";
            return `<div class="rb-tool${t[3] === "off" ? " rb-off" : ""}" style="width:${t[1]}px">${icon(t[0])}<div class="lb">${label(t[2])}</div>${caret}</div>`;
          })
          .join("");
        const nameStyle = p.launcher ? ' style="padding-right:16px"' : "";
        rib += `<div class="rb-panel" style="width:${p.w}px"><div class="rb-tools" style="padding-left:${p.pad || 0}px">${tools}</div><div class="rb-name"${nameStyle}>${p.name}${p.arrow ? "<i>▼</i>" : ""}${p.launcher ? "<em>↘</em>" : ""}</div></div>`;
      });
      rib += '<div class="rb-rest"></div>';
      $("ribbon").innerHTML = rib;

      // properties list: label, value, kind
      const props = [
        ["h", "图形"],
        ["视图比例", "1 : 100", "in"], ["比例值 1:", "100", "dim"], ["显示模型", "标准"], ["详细程度", "中等"], ["零件可见性", "显示原状态"],
        ["可见性/图形替换", "编辑...", "btn"], ["图形显示选项", "编辑...", "btn"], ["基线", "无"], ["基线方向", "平面", "dim"], ["方向", "项目北"],
        ["墙连接显示", "清理所有墙连...", "dim"], ["规程", "建筑"], ["显示隐藏线", "按规程"], ["颜色方案位置", "背景"], ["颜色方案", "方案 1", "btn"],
        ["系统颜色方案", "编辑...", "btn"], ["默认分析显示...", "无"], ["日光路径", "", "chk"],
        ["h", "范围"],
        ["裁剪视图", "", "chk"], ["裁剪区域可见", "", "chk"], ["注释裁剪", "", "chk"], ["视图范围", "编辑...", "btn"], ["相关标高", "标高 1", "dim"], ["范围框", "无"], ["截剪裁", "不剪裁", "btn"],
        ["h", "标识数据"],
        ["视图样板", "<无>", "btn"], ["视图名称", "标高 1"], ["相关性", "不相关", "dim"], ["图纸上的标题", ""], ["参照图纸", "", "dim"], ["参照详图", "", "dim"],
        ["h", "阶段化"],
        ["阶段过滤器", "全部显示"],
      ];
      const esc = (s) => s.replace(/</g, "&lt;").replace(/>/g, "&gt;");
      const chev = '<svg width="9" height="9" viewBox="0 0 9 9" fill="none" stroke="#222" stroke-width="1.500"><path d="M1 4l3.500-3L8 4M1 8l3.500-3L8 8"/></svg>';
      $("props").innerHTML = props
        .map(([k, v, t]) => {
          if (k === "h") return `<div class="prop-head d-flex">${v}${chev}</div>`;
          let val = esc(v);
          if (t === "btn") val = `<button type="button" class="btn prop-btn">${val}</button>`;
          if (t === "in") val = `<div class="prop-in">${val}</div>`;
          if (t === "chk") val = '<div class="prop-chk"></div>';
          return `<div class="prop-row d-flex${t === "dim" ? " dim" : ""}"><div class="prop-k">${k}</div><div class="prop-v">${val}</div></div>`;
        })
        .join("");

      // floor plan, in page coordinates (see the viewBox)
      const vx = [450, 609, 768, 927];
      const hy = [["C", 344], ["B", 541.5], ["A", 753.5]];
      let g = "";
      const dash = 'stroke-dasharray="44 11 11 11"';
      vx.forEach((x, i) => {
        const col = i === 3 ? "#8a0808" : "#d80000";
        g += `<line x1="${x}" y1="270" x2="${x}" y2="853" stroke="${col}" stroke-width="1.200" ${dash} stroke-dashoffset="3"/>`;
      });
      hy.forEach(([, y]) => {
        g += `<line x1="296" y1="${y}" x2="1073" y2="${y}" stroke="#e00000" stroke-width="1.300" ${dash} stroke-dashoffset="62"/><line x1="296" y1="${y}" x2="320" y2="${y}" stroke="#e00000" stroke-width="1.300"/>`;
      });
      const bubble = (x, y, t, fill = "#000", dy = 5) =>
        `<circle cx="${x}" cy="${y}" r="14.500" fill="${fill}" stroke="#e0e0e0" stroke-width="1.200"/><text x="${x - 3}" y="${y + dy}" font-family="Liberation Serif" font-size="14" fill="#e8e8e8" textLength="6" lengthAdjust="spacingAndGlyphs">${t}</text>`;
      g += '<g fill="none" stroke="#e8e8e8" stroke-width="1.500">' +
        '<path d="M447 340.500H930V756.500H690.500V636H447z"/>' +
        '<rect x="454" y="347.500" width="152" height="190.500"/><rect x="612" y="347.500" width="152.500" height="190.500"/>' +
        '<rect x="771" y="347.500" width="152" height="77.500"/><rect x="771" y="432" width="152" height="106"/>' +
        '<path d="M454 544.500H764.500V749H697V629H454z"/><rect x="771" y="544.500" width="152" height="204.500"/></g>';
      [["次卧室", 533, 438], ["客厅", 683, 438], ["卫生间", 853, 384], ["厨房", 853, 479], ["走廊", 642, 591], ["主卧室", 853, 636]].forEach(([t, x, y]) => {
        g += `<text x="${x}" y="${y + 5}" text-anchor="middle" font-size="14" fill="#f0f0f0" font-family="Noto Sans CJK SC">${t}</text>`;
      });
      vx.forEach((x, i) => (g += bubble(x, 255, i + 1)));
      hy.forEach(([t, y]) => (g += bubble(282, y - 1, t) + bubble(1087, y - 1, t)));

      // colour fill legend
      g += '<rect x="1185" y="415" width="212" height="84" rx="14" fill="#600000" stroke="#ffff00" stroke-width="2"/>' +
        '<rect x="1212" y="441" width="34" height="33" fill="none" stroke="#c86868"/>' +
        '<text x="1255" y="465" font-size="20" fill="#d88080" font-family="Noto Sans CJK SC" font-weight="300" letter-spacing="3">未定义颜色</text>';

      // step banner: bottom grid bubbles show through between fill and dashes
      g += '<rect x="430" y="871" width="968" height="122" fill="#434540"/>';
      vx.forEach((x, i) => (g += bubble(x, 867, i + 1, "none", 2)));
      g += '<rect x="430" y="871" width="968" height="122" fill="none" stroke="#ff6600" stroke-width="5" stroke-dasharray="24 18" stroke-dashoffset="-5"/>' +
        '<text x="576" y="948" font-size="48" fill="#ff3a00" font-family="Liberation Serif, Noto Sans CJK SC">第五步：颜色填充图例添加完毕</text>';

      // view window buttons and nav bar
      g += '<g stroke="#d8d8d8" stroke-width="2" fill="none"><path d="M1623 205h10M1642 200h7v7h-7zM1645 197h6v6M1659 198l8 9M1667 198l-8 9"/></g>' +
        '<rect x="1640" y="219" width="31" height="114" rx="4" fill="#5c5c5c"/>' +
        '<path d="M1645 274h24" stroke="#3a3a3a"/><circle cx="1653" cy="248" r="7" fill="#b8b8b8"/><circle cx="1653" cy="248" r="4" fill="none" stroke="#555"/>' +
        '<rect x="1648" y="285" width="9" height="11" fill="#5f8f50"/><circle cx="1657" cy="294" r="2" fill="#ccc"/>' +
        '<path d="M1664 325h5l-2.500 3zM1664 321h5" stroke="#bbb" fill="#bbb"/>';
      $("plan").innerHTML = g;

      // view control bar
      const strip = [
        '<rect x="1" y="1" width="14" height="14" fill="#eee" stroke="#333"/><path fill="#555" d="M3 3h5v5H3zM8 8h5v5H8z"/>',
        '<path fill="#eee" stroke="#444" d="M2 6l4-4h9v9l-4 4H2zM2 6h9v9M11 6l4-4"/>',
        '<circle cx="6" cy="6" r="4" fill="#f0c040" stroke="#a07010"/><path stroke="#d01818" stroke-width="2" d="M8 9l6 6M14 9l-6 6"/>',
        '<circle cx="6" cy="6" r="4.500" fill="#cfe2f8" stroke="#2a6fc0"/><path stroke="#d01818" stroke-width="2" d="M8 9l6 6M14 9l-6 6"/>',
        '<path stroke="#2a6fc0" fill="none" d="M1 10h6M4 4h6v11"/><path stroke="#d01818" stroke-width="2" d="M8 8l6 7M14 8l-6 7"/>',
        '<path stroke="#2a6fc0" fill="none" d="M1 8h6M8 2v13M5 2h8"/><circle cx="13" cy="10" r="3" fill="none" stroke="#2a6fc0"/>',
        '<path stroke="#444" fill="none" d="M1 6c3-4 6-4 8 0s4 4 6 0M4 13l5-7 3 6"/>',
        '<path fill="#8ec4e8" stroke="#2a6fc0" d="M8 1a3 3 0 0 1 3 3c0 3-3 5-3 9-0-4-3-6-3-9a3 3 0 0 1 3-3z"/>',
        '<rect x="2" y="3" width="11" height="10" fill="#fff" stroke="#333" stroke-dasharray="2 1"/><circle cx="13" cy="12" r="3" fill="#555"/>',
        '<path fill="#ddd" stroke="#a05030" d="M1 14V7l4-4h5l2 4v7z"/><circle cx="12" cy="7" r="3" fill="#f0c040"/>',
        '<path stroke="#444" fill="none" d="M1 1v14M15 1v14M1 4h14"/><rect x="5" y="9" width="7" height="6" fill="#aaa"/>',
      ];
      $("strip").innerHTML =
        '<div class="view-scale">1 : 100</div>' +
        strip.map((s) => `<svg width="16" height="16" viewBox="0 0 16 16">${s}</svg>`).join("") +
        '<span class="ms-1" style="font-size:7px">◀</span><div class="hbar-thumb"></div><span style="font-size:7px;margin-left:552px">▶</span>';

      // project browser tree: level, expander, icon, text
      const t0 = (path) => `<svg width="18" height="18" viewBox="0 0 18 18" fill="none" stroke="#555">${path}</svg>`;
      const tree = [
        [0, "-", t0('<path d="M2 5V2h3M13 2h3v3M2 13v3h3M13 16h3v-3"/><rect x="5" y="4" width="8" height="10" rx="2"/>'), "视图 (全部)"],
        [1, "-", "", "楼层平面"],
        [2, "", "", "场地"], [2, "", "", "标高 1", 1], [2, "e", "", "标高 2"],
        [1, "+", "", "天花板平面"], [1, "+", "", "三维视图"], [1, "+", "", "立面 (建筑立面)"],
        [1, "+", "", "面积平面 (人防分区面积)"], [1, "+", "", "面积平面 (净面积)"], [1, "+", "", "面积平面 (总建筑面积)"], [1, "e+", "", "面积平面 (防火分区面积)"],
        [0, "", t0('<rect x="2" y="1" width="14" height="16" fill="#e8e8e8"/><path stroke="#444" stroke-width="3" d="M4 5h10"/><path stroke="#666" stroke-dasharray="3 1.500" stroke-width="2" d="M4 9h10M4 13h10"/>'), "图例"],
        [0, "+", t0('<rect x="2" y="2" width="14" height="14" fill="#fff"/><path d="M2 6h14M2 10h14M2 13h14M7 2v14"/>'), "明细表/数量"],
        [0, "", t0('<path fill="#f4f4f4" d="M2 1h10l4 4v12H2z"/><path d="M12 1v4h4M5 13V8h4v5"/>'), "图纸 (全部)"],
        [0, "+", t0('<path fill="#f4f4f4" d="M3 2h5v7h4V2h3v14H3z"/>'), "族"],
        [0, "+", t0('<path d="M5 1H2v16h3M13 1h3v16h-3"/><circle cx="9" cy="9" r="3.500"/>'), "组"],
        [0, "l", '<svg width="18" height="18" viewBox="0 0 18 18" fill="none" stroke="#d8a020" stroke-width="2"><ellipse cx="6" cy="9" rx="4" ry="3"/><ellipse cx="12" cy="9" rx="4" ry="3"/></svg>', "Revit 链接"],
      ];
      const box = (e) => (e.includes("+") ? "<u>+</u>" : e === "-" ? "<u>-</u>" : "");
      $("tree").innerHTML = tree
        .map(([lv, e, ic0, text, on], i) => {
          const firstCol = lv === 0 ? (i === 0 ? "bot h" : e === "l" ? "top h" : "v h") : "v";
          let cells = `<div class="tc ${firstCol}">${lv === 0 ? box(e) : ""}</div>`;
          if (lv === 0) cells += `<div class="d-flex justify-content-center" style="width:20px">${ic0}</div>`;
          if (lv === 1) cells += `<div class="tc ${e === "-" ? "bot" : e === "e+" ? "top" : "v"} h">${box(e)}</div>`;
          if (lv === 2) cells += `<div class="tc v"></div><div class="tc ${e === "e" ? "top" : "v"} h"></div>`;
          const ml = lv === 0 ? 2 : lv === 1 ? 7 : on ? 5 : 7;
          return `<div class="tree-row d-flex align-items-center">${cells}<span class="${on ? "tree-sel" : ""}" style="margin-left:${ml}px">${text}</span></div>`;
        })
        .join("");
    </script>
  </body>
</html>
